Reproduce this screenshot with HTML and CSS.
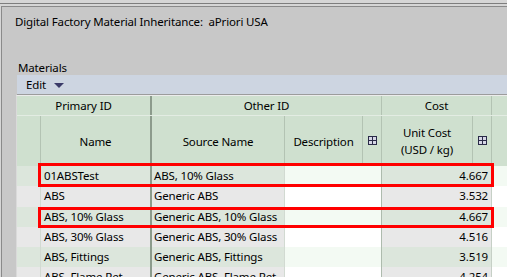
FILE: index.html
```html
<!DOCTYPE html>
<html lang="en">
<head>
  <meta charset="UTF-8">
  <title>Digital Factory Material Inheritance</title>
  <link rel="stylesheet" href="styles.css">
</head>
<body>
  <div class="frame">
    <div class="panel">
      <div class="title">Digital Factory Material Inheritance:&nbsp; aPriori USA</div>
      <div class="section-label">Materials</div>
      <div class="toolbar">
        <span class="menu">Edit</span>
        <span class="caret"></span>
      </div>

      <div class="table">
        <div class="head-groups">
          <div class="hcell primary">Primary ID</div>
          <div class="hcell">Other ID</div>
          <div class="hcell">Cost</div>
          <div class="hcell last"></div>
        </div>
        <div class="head-cols">
          <div class="hcell"></div>
          <div class="hcell primary">Name</div>
          <div class="hcell">Source Name</div>
          <div class="hcell">Description</div>
          <div class="hcell icon">
            <svg width="9" height="9" viewBox="0 0 9 9"><rect x="0.5" y="0.5" width="8" height="8" fill="#d6d6e6" stroke="#2a2a48"/><path d="M4.5 0v9M0 4.5h9" stroke="#2a2a48"/></svg>
          </div>
          <div class="hcell">Unit Cost<br>(USD / kg)</div>
          <div class="hcell icon">
            <svg width="9" height="9" viewBox="0 0 9 9"><rect x="0.5" y="0.5" width="8" height="8" fill="#d6d6e6" stroke="#2a2a48"/><path d="M4.5 0v9M0 4.5h9" stroke="#2a2a48"/></svg>
          </div>
          <div class="hcell last"></div>
        </div>

        <div class="row odd">
          <div class="cell"></div>
          <div class="cell name">01ABSTest</div>
          <div class="cell source">ABS, 10% Glass</div>
          <div class="cell desc"></div>
          <div class="cell cost">4.667</div>
          <div class="cell extra"></div>
        </div>
        <div class="row">
          <div class="cell"></div>
          <div class="cell name">ABS</div>
          <div class="cell source">Generic ABS</div>
          <div class="cell desc"></div>
          <div class="cell cost">3.532</div>
          <div class="cell extra"></div>
        </div>
        <div class="row odd">
          <div class="cell"></div>
          <div class="cell name">ABS, 10% Glass</div>
          <div class="cell source">Generic ABS, 10% Glass</div>
          <div class="cell desc"></div>
          <div class="cell cost">4.667</div>
          <div class="cell extra"></div>
        </div>
        <div class="row">
          <div class="cell"></div>
          <div class="cell name">ABS, 30% Glass</div>
          <div class="cell source">Generic ABS, 30% Glass</div>
          <div class="cell desc"></div>
          <div class="cell cost">4.516</div>
          <div class="cell extra"></div>
        </div>
        <div class="row odd">
          <div class="cell"></div>
          <div class="cell name">ABS, Fittings</div>
          <div class="cell source">Generic ABS, Fittings</div>
          <div class="cell desc"></div>
          <div class="cell cost">3.519</div>
          <div class="cell extra"></div>
        </div>
        <div class="row">
          <div class="cell"></div>
          <div class="cell name">ABS, Flame Ret</div>
          <div class="cell source">Generic ABS, Flame Ret</div>
          <div class="cell desc"></div>
          <div class="cell cost">4.254</div>
          <div class="cell extra"></div>
        </div>

        <!-- highlight boxes drawn over the grid -->
        <div class="mark mark-first"></div>
        <div class="mark mark-third"></div>
      </div>
    </div>
  </div>
</body>
</html>
```

FILE: styles.css
```css
* {
  box-sizing: border-box;
}

html,
body {
  margin: 0;
  height: 100%;
}

body {
  font-family: "Noto Sans", "Open Sans", sans-serif;
  font-size: 11.5px;
  letter-spacing: -0.15px;
  color: #000;
  background: #d6d6d6;
  overflow: hidden;
}

.frame {
  margin-top: 3px;
  border-top: 1px solid #7e7e7e;
  padding-top: 2px;
  height: calc(100% - 3px);
}

.panel {
  margin-left: 1px;
  height: 100%;
  padding-top: 7px;
  border-top: 1px solid #8a8a8a;
  border-left: 1px solid #8a8a8a;
  background: #c8c8c8;
}

.title {
  margin-left: 13px;
  line-height: 16px;
}

.section-label {
  margin: 30px 0 0 16px;
  line-height: 16px;
}

.toolbar {
  display: flex;
  align-items: center;
  gap: 8px;
  margin: -1px 0 0 15px;
  height: 20px;
  padding-left: 9px;
  background: #cdd5e1;
  border-bottom: 1px solid #9c9c9c;
}

.caret {
  width: 0;
  height: 0;
  margin-top: 1px;
  border-left: 5px solid transparent;
  border-right: 5px solid transparent;
  border-top: 5px solid #3a3a68;
}

.table {
  position: relative;
  margin-left: 14px;
  border-left: 1px solid #dadada;
  border-top: 1px solid #ececec;
}

.head-groups,
.head-cols,
.row {
  display: grid;
}

.head-groups {
  grid-template-columns: 135px 230px 110px 1fr;
  height: 20px;
  border-bottom: 1px solid #e3ece3;
}

.head-cols {
  grid-template-columns: 24px 111px 133px 78px 19px 91px 19px 1fr;
  height: 50px;
}

.hcell {
  display: flex;
  align-items: center;
  justify-content: center;
  text-align: center;
  line-height: 17px;
  background: #cfe0cf;
  border-right: 1px solid #b3c3b3;
}

.hcell.primary {
  border-right: 2px solid #8c9b8c;
}

.hcell.icon {
  padding-bottom: 2px;
}

.hcell.last {
  border-right: none;
}

.row {
  grid-template-columns: 24px 111px 133px 97px 110px 1fr;
  height: 20.25px;
  background: #e8e8e8;
}

.row.odd {
  background: #dce6dc;
}

.cell {
  line-height: 20px;
  white-space: nowrap;
  overflow: hidden;
  border-right: 1px solid #d2dad2;
}

.cell.name {
  padding-left: 3px;
  border-right: 2px solid #8c9b8c;
}

.cell.source {
  padding-left: 2px;
}

.cell.desc,
.cell.extra {
  background: #fff;
}

.row.odd .cell.desc,
.row.odd .cell.extra {
  background: #f3faf3;
}

.cell.desc {
  border-right: 1px solid #aebbae;
}

.cell.cost {
  text-align: right;
  padding-right: 3px;
  border-right: 1px solid #c6d0c6;
}

.cell.extra {
  border-right: none;
}

.mark {
  position: absolute;
  left: 21px;
  width: 456px;
  border: 3px solid #ff0000;
}

.mark-first {
  top: 67px;
  height: 24px;
}

.mark-third {
  top: 111px;
  height: 21px;
}
```
